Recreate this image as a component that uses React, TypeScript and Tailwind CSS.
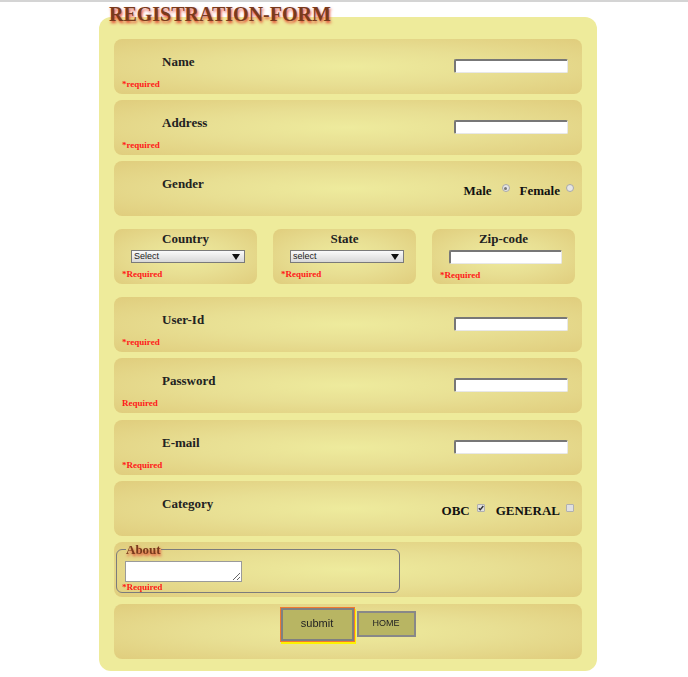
import React, { FC, ReactNode } from "react";

const serif = "font-['Liberation_Serif',serif]";
const sans = "font-['Liberation_Sans',Arial,sans-serif]";
const rowBg =
  "rounded-[8px] bg-[radial-gradient(ellipse_at_center,#eeeb9d_0%,#e8df93_45%,#e0cd7d_100%)]";

const TextBox: FC<{ w?: string }> = ({ w = "w-[114px]" }) => (
  <input
    type="text"
    className={`${w} block h-[14px] p-0 rounded-[2px] bg-white border-t-2 border-l-2 border-b border-r border-t-[#777] border-l-[#777] border-b-[#e8e8e8] border-r-[#e8e8e8] outline-none`}
  />
);

const Radio: FC<{ checked?: boolean }> = ({ checked }) => (
  <span className="mt-[1px] flex h-[8px] w-[8px] items-center justify-center rounded-full border border-[#a9a9a9] bg-[#e6e6e6]">
    {checked && <span className="h-[3px] w-[3px] rounded-full bg-[#777]" />}
  </span>
);

const Check: FC<{ checked?: boolean }> = ({ checked }) => (
  <span className="mt-[1px] flex h-[8px] w-[8px] items-center justify-center rounded-[1px] border border-[#b0b0b0] bg-[#e0e0e0]">
    {checked && (
      <svg width="6" height="6" viewBox="0 0 6 6">
        <path d="M0.8 3.2 L2.3 4.7 L5.3 1" stroke="#333" strokeWidth="1.4" fill="none" />
      </svg>
    )}
  </span>
);

const Req: FC<{ children: ReactNode; className?: string }> = ({ children, className = "" }) => (
  <span className={`${serif} text-[9px] font-bold leading-[10px] text-[#ff1a1a] ${className}`}>{children}</span>
);

const Row: FC<{ label: string; req?: string; right?: ReactNode; className?: string }> = ({
  label,
  req,
  right,
  className = "",
}) => (
  <div className={`flex h-[55px] ${rowBg} ${className}`}>
    <div className="flex flex-1 flex-col pl-[8px] pt-[15px]">
      <span className={`${serif} ml-[40px] text-[13px] font-bold leading-[16px] text-[#222]`}>{label}</span>
      {req && <Req className="mt-[9px]">{req}</Req>}
    </div>
    {right}
  </div>
);

const InputSide = () => (
  <div className="pr-[14px] pt-[20px]">
    <TextBox />
  </div>
);

const SelectBox: FC<{ text: string }> = ({ text }) => (
  <div className="ml-[17px] mt-[3px] flex h-[13px] w-[114px] items-center justify-between border border-[#7a7a7a] bg-[linear-gradient(#fafafa,#d8d8d8)] pl-[2px] pr-[4px]">
    <span className={`${sans} text-[9px] leading-none text-[#222]`}>{text}</span>
    <svg width="8" height="6" viewBox="0 0 8 6">
      <path d="M0 0 H8 L4 6 Z" fill="#111" />
    </svg>
  </div>
);

const SmallBox: FC<{ title: string; children: ReactNode }> = ({ title, children }) => (
  <div className={`flex h-[55px] w-[143px] flex-col pt-[2px] ${rowBg}`}>
    <span className={`${serif} text-center text-[13px] font-bold leading-[16px] text-[#222]`}>{title}</span>
    {children}
    <Req className="ml-[8px] mt-[6px]">*Required</Req>
  </div>
);

const opt = `${serif} text-[13px] font-bold leading-[16px] text-[#111]`;

export default function App() {
  return (
    <div className="min-h-screen border-t-2 border-[#d4d4d4] bg-white">
      <div className="ml-[99px] w-[498px]">
        <h1
          className={`${serif} relative z-10 ml-[10px] h-[15px] text-[20px] font-bold leading-[25px] text-[#7a3a1c] [text-shadow:1px_2px_3px_#e23b2b]`}
        >
          REGISTRATION-FORM
        </h1>
        <div className="flex flex-col rounded-[12px] bg-[#eeeb9b] px-[15px] pb-[12px] pt-[22px]">
          <Row label="Name" req="*required" right={<InputSide />} />
          <Row label="Address" req="*required" right={<InputSide />} className="mt-[6px]" />
          <Row
            label="Gender"
            className="mt-[6px]"
            right={
              <div className="flex items-start pr-[8px] pt-[22px]">
                <span className={opt}>Male</span>
                <span className="ml-[10px]">
                  <Radio checked />
                </span>
                <span className={`${opt} ml-[10px]`}>Female</span>
                <span className="ml-[6px]">
                  <Radio />
                </span>
              </div>
            }
          />
          <div className="mt-[13px] flex gap-[16px]">
            <SmallBox title="Country">
              <SelectBox text="Select" />
            </SmallBox>
            <SmallBox title="State">
              <SelectBox text="select" />
            </SmallBox>
            <SmallBox title="Zip-code">
              <div className="ml-[17px] mt-[3px]">
                <TextBox w="w-[113px]" />
              </div>
            </SmallBox>
          </div>
          <Row label="User-Id" req="*required" right={<InputSide />} className="mt-[13px]" />
          <Row label="Password" req="Required" right={<InputSide />} className="mt-[6px]" />
          <Row label="E-mail" req="*Required" right={<InputSide />} className="mt-[7px]" />
          <Row
            label="Category"
            className="mt-[6px]"
            right={
              <div className="flex items-start pr-[8px] pt-[22px]">
                <span className={opt}>OBC</span>
                <span className="ml-[7px]">
                  <Check checked />
                </span>
                <span className={`${opt} ml-[11px]`}>GENERAL</span>
                <span className="ml-[6px]">
                  <Check />
                </span>
              </div>
            }
          />
          <div className={`mt-[6px] h-[55px] ${rowBg}`}>
            <fieldset className="m-0 ml-[2px] w-[284px] rounded-[6px] border border-[#7c7c7c] p-0">
              <legend
                className={`${serif} ml-[9px] px-0 text-[13px] font-bold leading-[15px] text-[#7a3a1c] [text-shadow:1px_2px_3px_#e23b2b]`}
              >
                About
              </legend>
              <textarea className="ml-[8px] mt-[4px] block h-[21px] w-[117px] border border-[#9a9a9a] bg-white outline-none" />
              <Req className="ml-[5px] block leading-[8px]">*Required</Req>
            </fieldset>
          </div>
          <div className={`mt-[7px] flex h-[55px] items-start justify-center pt-[4px] ${rowBg}`}>
            <button
              className={`${sans} h-[33px] w-[73px] border-2 border-[#808080] bg-[#b8b563] pb-[3px] text-[11px] text-[#222] shadow-[0_0_0_1px_#f07a30,1px_2px_0_1px_#fff200]`}
            >
              submit
            </button>
            <button
              className={`${sans} ml-[3px] mt-[3px] h-[26px] w-[59px] border-2 border-[#888] bg-[#b8b563] text-[9px] text-[#222]`}
            >
              HOME
            </button>
          </div>
        </div>
      </div>
    </div>
  );
}
